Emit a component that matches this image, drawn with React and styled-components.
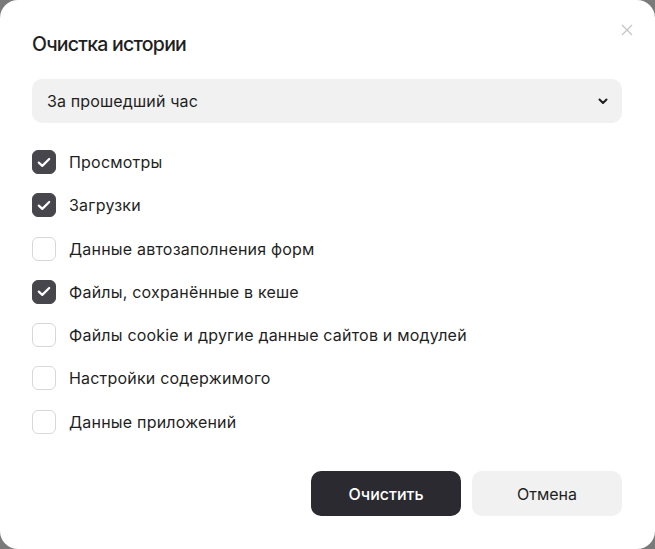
import React, { useState } from 'react';
import styled, { createGlobalStyle } from 'styled-components';

const GlobalStyle = createGlobalStyle`
  html, body {
    margin: 0;
    padding: 0;
    background: #7a7a7a;
  }
  body {
    font-family: Inter, "Noto Sans", sans-serif;
    color: #1f1f1f;
  }
`;

const Dialog = styled.div`
  position: relative;
  box-sizing: border-box;
  width: 655px;
  height: 549px;
  background: #fff;
  border-radius: 18px;
  padding: 28px 33px 0 32px;
  display: flex;
  flex-direction: column;
`;

const Title = styled.h1`
  margin: 0;
  font-size: 19.5px;
  font-weight: 500;
  line-height: 32px;
  letter-spacing: -0.75px;
`;

const CloseButton = styled.button`
  position: absolute;
  top: 22px;
  right: 20px;
  width: 16px;
  height: 16px;
  padding: 0;
  border: 0;
  background: transparent;
  cursor: pointer;
  display: flex;
  align-items: center;
  justify-content: center;
`;

const Select = styled.div`
  margin-top: 19px;
  height: 44px;
  border-radius: 10px;
  background: #f1f1f1;
  display: flex;
  align-items: center;
  justify-content: space-between;
  padding: 0 14px 0 15px;
  font-size: 16px;
  letter-spacing: 0.15px;
`;

const List = styled.div`
  margin-top: 27px;
  display: flex;
  flex-direction: column;
  gap: 19.3px;
`;

const Row = styled.label`
  display: flex;
  align-items: center;
  gap: 13px;
  height: 24px;
  font-size: 16px;
  letter-spacing: 0.2px;
  cursor: pointer;
`;

const Box = styled.span`
  box-sizing: border-box;
  width: 24px;
  height: 24px;
  border-radius: 6px;
  flex-shrink: 0;
  display: flex;
  align-items: center;
  justify-content: center;
  background: ${(p) => (p.checked ? '#47464c' : '#fff')};
  border: 1px solid ${(p) => (p.checked ? '#47464c' : '#d8d8d8')};
`;

const Footer = styled.div`
  margin-top: auto;
  margin-bottom: 33px;
  display: flex;
  justify-content: flex-end;
  gap: 11px;
`;

const Button = styled.button`
  width: 150px;
  height: 45px;
  border: 0;
  border-radius: 10px;
  font-family: inherit;
  font-size: 16px;
  font-weight: ${(p) => (p.primary ? 500 : 400)};
  background: ${(p) => (p.primary ? '#2b2a30' : '#f1f1f1')};
  color: ${(p) => (p.primary ? '#fff' : '#1f1f1f')};
  cursor: pointer;
`;

const items = [
  { label: 'Просмотры', checked: true },
  { label: 'Загрузки', checked: true },
  { label: 'Данные автозаполнения форм', checked: false },
  { label: 'Файлы, сохранённые в кеше', checked: true },
  { label: 'Файлы cookie и другие данные сайтов и модулей', checked: false },
  { label: 'Настройки содержимого', checked: false },
  { label: 'Данные приложений', checked: false },
];

const Check = () => (
  <svg width="14" height="11" viewBox="0 0 14 11" fill="none">
    <path d="M1.8 5.6 L5.3 8.9 L12.2 2" stroke="#fff" strokeWidth="2.2" strokeLinecap="round" strokeLinejoin="round" />
  </svg>
);

const App = () => {
  const [state, setState] = useState(items.map((i) => i.checked));

  const toggle = (idx) =>
    setState((prev) => prev.map((v, i) => (i === idx ? !v : v)));

  return (
    <>
      <GlobalStyle />
      <Dialog>
        <CloseButton aria-label="Закрыть">
          <svg width="12" height="12" viewBox="0 0 12 12">
            <path d="M1 1 L11 11 M11 1 L1 11" stroke="#c4c4c4" strokeWidth="1.2" />
          </svg>
        </CloseButton>
        <Title>Очистка истории</Title>
        <Select>
          За прошедший час
          <svg width="10" height="7" viewBox="0 0 10 7">
            <path d="M1.5 1.5 L5 5 L8.5 1.5" stroke="#1f1f1f" strokeWidth="2" fill="none" strokeLinecap="round" strokeLinejoin="round" />
          </svg>
        </Select>
        <List>
          {items.map((item, idx) => (
            <Row key={item.label} onClick={() => toggle(idx)}>
              <Box checked={state[idx]}>{state[idx] && <Check />}</Box>
              {item.label}
            </Row>
          ))}
        </List>
        <Footer>
          <Button primary>Очистить</Button>
          <Button>Отмена</Button>
        </Footer>
      </Dialog>
    </>
  );
};

export default App;
